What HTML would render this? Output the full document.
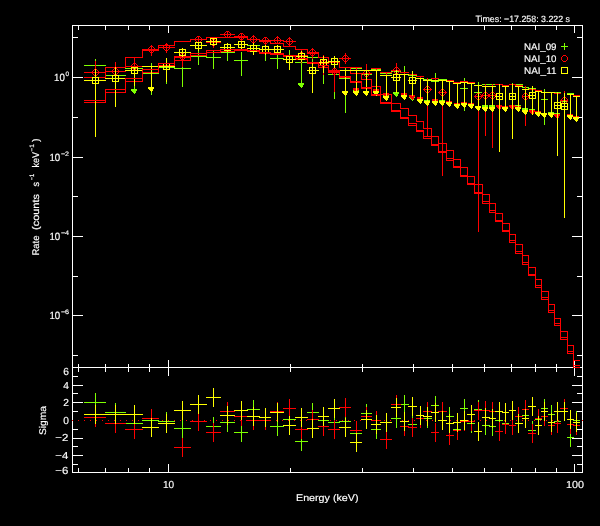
<!DOCTYPE html><html><head><meta charset="utf-8"><title>Spectral fit</title><style>html,body{margin:0;padding:0;background:#000;overflow:hidden}body{width:600px;height:526px;font-family:"Liberation Sans",sans-serif}</style></head><body><svg width="600" height="526" viewBox="0 0 600 526" shape-rendering="crispEdges" style="display:block"><rect width="600" height="526" fill="#000"/><path fill="#ffffff" d="M72 25h511v1h-511zM72 367h511v1h-511zM72 472h511v1h-511zM72 25h1v448h-1zM582 25h1v448h-1zM78 26h1v4h-1zM78 364h1v8h-1zM78 468h1v4h-1zM105 26h1v4h-1zM105 364h1v8h-1zM105 468h1v4h-1zM128 26h1v4h-1zM128 364h1v8h-1zM128 468h1v4h-1zM149 26h1v4h-1zM149 364h1v8h-1zM149 468h1v4h-1zM290 26h1v4h-1zM290 364h1v8h-1zM290 468h1v4h-1zM362 26h1v4h-1zM362 364h1v8h-1zM362 468h1v4h-1zM413 26h1v4h-1zM413 364h1v8h-1zM413 468h1v4h-1zM452 26h1v4h-1zM452 364h1v8h-1zM452 468h1v4h-1zM484 26h1v4h-1zM484 364h1v8h-1zM484 468h1v4h-1zM511 26h1v4h-1zM511 364h1v8h-1zM511 468h1v4h-1zM535 26h1v4h-1zM535 364h1v8h-1zM535 468h1v4h-1zM556 26h1v4h-1zM556 364h1v8h-1zM556 468h1v4h-1zM168 26h1v7h-1zM168 360h1v16h-1zM168 464h1v8h-1zM574 26h1v7h-1zM574 360h1v16h-1zM574 464h1v8h-1zM73 355h5v1h-5zM577 355h5v1h-5zM73 315h10v1h-10zM572 315h10v1h-10zM73 276h5v1h-5zM577 276h5v1h-5zM73 236h10v1h-10zM572 236h10v1h-10zM73 196h5v1h-5zM577 196h5v1h-5zM73 157h10v1h-10zM572 157h10v1h-10zM73 117h5v1h-5zM577 117h5v1h-5zM73 77h10v1h-10zM572 77h10v1h-10zM73 37h5v1h-5zM577 37h5v1h-5zM73 464h5v1h-5zM577 464h5v1h-5zM73 455h10v1h-10zM572 455h10v1h-10zM73 446h5v1h-5zM577 446h5v1h-5zM73 438h10v1h-10zM572 438h10v1h-10zM73 429h5v1h-5zM577 429h5v1h-5zM73 411h5v1h-5zM577 411h5v1h-5zM73 402h10v1h-10zM572 402h10v1h-10zM73 393h5v1h-5zM577 393h5v1h-5zM73 385h10v1h-10zM572 385h10v1h-10zM73 376h5v1h-5zM577 376h5v1h-5z"/><path fill="#7fff00" d="M84 65h22v1h-22zM95 59h1v22h-1zM105 75h21v1h-21zM115 70h1v16h-1zM125 68h18v1h-18zM134 68h1v25h-1zM131 89h6v1h-6zM131 90h6v1h-6zM132 91h4v1h-4zM133 92h3v1h-3zM134 93h1v1h-1zM142 73h17v1h-17zM151 63h1v32h-1zM158 67h17v1h-17zM166 62h1v22h-1zM174 68h17v1h-17zM182 62h1v25h-1zM190 56h17v1h-17zM198 50h1v15h-1zM206 57h15v1h-15zM213 51h1v18h-1zM220 52h15v1h-15zM227 47h1v14h-1zM234 60h14v1h-14zM241 52h1v24h-1zM247 45h13v1h-13zM253 43h1v8h-1zM259 53h12v1h-12zM265 46h1v15h-1zM270 58h14v1h-14zM277 55h1v14h-1zM283 56h13v1h-13zM289 50h1v13h-1zM295 62h13v1h-13zM301 62h1v25h-1zM298 83h6v1h-6zM298 84h6v1h-6zM299 85h4v1h-4zM300 86h3v1h-3zM301 87h1v1h-1zM307 57h12v1h-12zM312 53h1v11h-1zM318 67h11v1h-11zM323 60h1v24h-1zM328 74h12v1h-12zM334 67h1v32h-1zM339 78h12v1h-12zM345 68h1v45h-1zM350 68h12v1h-12zM356 68h1v25h-1zM353 89h6v1h-6zM353 90h6v1h-6zM354 91h4v1h-4zM355 92h3v1h-3zM356 93h1v1h-1zM361 74h11v1h-11zM366 70h1v11h-1zM371 69h10v1h-10zM376 69h1v25h-1zM373 90h6v1h-6zM373 91h6v1h-6zM374 92h4v1h-4zM375 93h3v1h-3zM376 94h1v1h-1zM380 73h12v1h-12zM386 73h1v25h-1zM383 94h6v1h-6zM383 95h6v1h-6zM384 96h4v1h-4zM385 97h3v1h-3zM386 98h1v1h-1zM391 71h10v1h-10zM396 71h1v25h-1zM393 92h6v1h-6zM393 93h6v1h-6zM394 94h4v1h-4zM395 95h3v1h-3zM396 96h1v1h-1zM400 72h9v1h-9zM404 66h1v15h-1zM408 75h9v1h-9zM412 75h1v25h-1zM409 96h6v1h-6zM409 97h6v1h-6zM410 98h4v1h-4zM411 99h3v1h-3zM412 100h1v1h-1zM423 79h9v1h-9zM427 79h1v25h-1zM424 100h6v1h-6zM424 101h6v1h-6zM425 102h4v1h-4zM426 103h3v1h-3zM427 104h1v1h-1zM431 81h8v1h-8zM435 73h1v18h-1zM438 79h9v1h-9zM442 79h1v25h-1zM439 100h6v1h-6zM439 101h6v1h-6zM440 102h4v1h-4zM441 103h3v1h-3zM442 104h1v1h-1zM460 88h8v1h-8zM464 78h1v33h-1zM474 92h8v1h-8zM478 82h1v19h-1zM482 84h8v1h-8zM485 84h1v25h-1zM482 105h6v1h-6zM482 106h6v1h-6zM483 107h4v1h-4zM484 108h3v1h-3zM485 109h1v1h-1zM489 84h7v1h-7zM492 84h1v25h-1zM489 105h6v1h-6zM489 106h6v1h-6zM490 107h4v1h-4zM491 108h3v1h-3zM492 109h1v1h-1zM509 96h7v1h-7zM512 83h1v13h-1zM515 84h8v1h-8zM518 84h1v25h-1zM515 105h6v1h-6zM515 106h6v1h-6zM516 107h4v1h-4zM517 108h3v1h-3zM518 109h1v1h-1zM522 87h7v1h-7zM525 87h1v25h-1zM522 108h6v1h-6zM522 109h6v1h-6zM523 110h4v1h-4zM524 111h3v1h-3zM525 112h1v1h-1zM528 88h8v1h-8zM532 88h1v25h-1zM529 109h6v1h-6zM529 110h6v1h-6zM530 111h4v1h-4zM531 112h3v1h-3zM532 113h1v1h-1zM541 99h7v1h-7zM544 89h1v36h-1zM548 92h7v1h-7zM551 92h1v24h-1zM548 112h6v1h-6zM548 113h6v1h-6zM549 114h4v1h-4zM550 115h3v1h-3zM551 116h1v1h-1zM554 92h7v1h-7zM557 92h1v25h-1zM554 113h6v1h-6zM554 114h6v1h-6zM555 115h4v1h-4zM556 116h3v1h-3zM557 117h1v1h-1zM560 101h8v1h-8zM564 95h1v14h-1zM567 93h7v1h-7zM570 93h1v25h-1zM567 114h6v1h-6zM567 115h6v1h-6zM568 116h4v1h-4zM569 117h3v1h-3zM570 118h1v1h-1z"/><path fill="#ff0000" d="M84 102h22v1h-22zM105 92h1v11h-1zM105 92h21v1h-21zM125 81h1v12h-1zM125 81h18v1h-18zM142 72h1v10h-1zM142 72h17v1h-17zM158 65h1v8h-1zM158 65h17v1h-17zM174 60h1v6h-1zM174 60h17v1h-17zM190 55h1v6h-1zM190 55h17v1h-17zM206 52h1v4h-1zM206 52h15v1h-15zM220 51h1v2h-1zM220 51h15v1h-15zM234 50h1v2h-1zM234 50h14v1h-14zM247 50h1v2h-1zM247 51h13v1h-13zM259 51h1v3h-1zM259 53h12v1h-12zM270 53h1v2h-1zM270 54h14v1h-14zM283 54h1v3h-1zM283 56h13v1h-13zM295 56h1v4h-1zM295 59h13v1h-13zM307 59h1v5h-1zM307 63h12v1h-12zM318 63h1v5h-1zM318 67h11v1h-11zM328 67h1v6h-1zM328 72h12v1h-12zM339 72h1v6h-1zM339 77h12v1h-12zM350 77h1v6h-1zM350 82h12v1h-12zM361 82h1v7h-1zM361 88h11v1h-11zM371 88h1v8h-1zM371 95h10v1h-10zM380 95h1v9h-1zM380 103h12v1h-12zM391 103h1v9h-1zM391 111h10v1h-10zM400 111h1v8h-1zM400 118h9v1h-9zM408 118h1v8h-1zM408 125h9v1h-9zM416 125h1v7h-1zM416 131h8v1h-8zM423 131h1v8h-1zM423 138h9v1h-9zM431 138h1v8h-1zM431 145h8v1h-8zM438 145h1v8h-1zM438 152h9v1h-9zM446 152h1v9h-1zM446 160h8v1h-8zM453 160h1v8h-1zM453 167h8v1h-8zM460 167h1v10h-1zM460 176h8v1h-8zM467 176h1v9h-1zM467 184h8v1h-8zM474 184h1v10h-1zM474 193h9v1h-9zM482 193h1v11h-1zM482 203h8v1h-8zM489 203h1v10h-1zM489 212h7v1h-7zM495 212h1v10h-1zM495 221h8v1h-8zM502 221h1v11h-1zM502 231h8v1h-8zM509 231h1v12h-1zM509 242h7v1h-7zM515 242h1v12h-1zM515 253h8v1h-8zM522 253h1v12h-1zM522 264h7v1h-7zM528 264h1v12h-1zM528 275h8v1h-8zM535 275h1v13h-1zM535 287h7v1h-7zM541 287h1v13h-1zM541 299h8v1h-8zM548 299h1v14h-1zM548 312h7v1h-7zM554 312h1v14h-1zM554 325h7v1h-7zM560 325h1v15h-1zM560 339h8v1h-8zM567 339h1v15h-1zM567 353h7v1h-7zM573 353h1v15h-1zM573 367h7v1h-7z"/><path fill="#ff0000" d="M84 72h22v1h-22zM95 61h1v40h-1zM95 75h1v1h-1zM95 69h1v1h-1zM95 75h1v1h-1zM95 69h1v1h-1zM96 75h1v1h-1zM96 69h1v1h-1zM94 75h1v1h-1zM94 69h1v1h-1zM97 74h1v1h-1zM97 70h1v1h-1zM93 74h1v1h-1zM93 70h1v1h-1zM98 73h1v1h-1zM98 71h1v1h-1zM92 73h1v1h-1zM92 71h1v1h-1zM98 72h1v1h-1zM98 72h1v1h-1zM92 72h1v1h-1zM92 72h1v1h-1zM105 71h21v1h-21zM115 62h1v24h-1zM115 74h1v1h-1zM115 68h1v1h-1zM115 74h1v1h-1zM115 68h1v1h-1zM116 74h1v1h-1zM116 68h1v1h-1zM114 74h1v1h-1zM114 68h1v1h-1zM117 73h1v1h-1zM117 69h1v1h-1zM113 73h1v1h-1zM113 69h1v1h-1zM118 72h1v1h-1zM118 70h1v1h-1zM112 72h1v1h-1zM112 70h1v1h-1zM118 71h1v1h-1zM118 71h1v1h-1zM112 71h1v1h-1zM112 71h1v1h-1zM125 66h18v1h-18zM134 58h1v18h-1zM134 69h1v1h-1zM134 63h1v1h-1zM134 69h1v1h-1zM134 63h1v1h-1zM135 69h1v1h-1zM135 63h1v1h-1zM133 69h1v1h-1zM133 63h1v1h-1zM136 68h1v1h-1zM136 64h1v1h-1zM132 68h1v1h-1zM132 64h1v1h-1zM137 67h1v1h-1zM137 65h1v1h-1zM131 67h1v1h-1zM131 65h1v1h-1zM137 66h1v1h-1zM137 66h1v1h-1zM131 66h1v1h-1zM131 66h1v1h-1zM142 49h17v1h-17zM151 45h1v11h-1zM151 52h1v1h-1zM151 46h1v1h-1zM151 52h1v1h-1zM151 46h1v1h-1zM152 52h1v1h-1zM152 46h1v1h-1zM150 52h1v1h-1zM150 46h1v1h-1zM153 51h1v1h-1zM153 47h1v1h-1zM149 51h1v1h-1zM149 47h1v1h-1zM154 50h1v1h-1zM154 48h1v1h-1zM148 50h1v1h-1zM148 48h1v1h-1zM154 49h1v1h-1zM154 49h1v1h-1zM148 49h1v1h-1zM148 49h1v1h-1zM158 47h17v1h-17zM166 43h1v10h-1zM166 50h1v1h-1zM166 44h1v1h-1zM166 50h1v1h-1zM166 44h1v1h-1zM167 50h1v1h-1zM167 44h1v1h-1zM165 50h1v1h-1zM165 44h1v1h-1zM168 49h1v1h-1zM168 45h1v1h-1zM164 49h1v1h-1zM164 45h1v1h-1zM169 48h1v1h-1zM169 46h1v1h-1zM163 48h1v1h-1zM163 46h1v1h-1zM169 47h1v1h-1zM169 47h1v1h-1zM163 47h1v1h-1zM163 47h1v1h-1zM174 56h17v1h-17zM182 50h1v17h-1zM182 59h1v1h-1zM182 53h1v1h-1zM182 59h1v1h-1zM182 53h1v1h-1zM183 59h1v1h-1zM183 53h1v1h-1zM181 59h1v1h-1zM181 53h1v1h-1zM184 58h1v1h-1zM184 54h1v1h-1zM180 58h1v1h-1zM180 54h1v1h-1zM185 57h1v1h-1zM185 55h1v1h-1zM179 57h1v1h-1zM179 55h1v1h-1zM185 56h1v1h-1zM185 56h1v1h-1zM179 56h1v1h-1zM179 56h1v1h-1zM190 39h17v1h-17zM198 36h1v7h-1zM198 42h1v1h-1zM198 36h1v1h-1zM198 42h1v1h-1zM198 36h1v1h-1zM199 42h1v1h-1zM199 36h1v1h-1zM197 42h1v1h-1zM197 36h1v1h-1zM200 41h1v1h-1zM200 37h1v1h-1zM196 41h1v1h-1zM196 37h1v1h-1zM201 40h1v1h-1zM201 38h1v1h-1zM195 40h1v1h-1zM195 38h1v1h-1zM201 39h1v1h-1zM201 39h1v1h-1zM195 39h1v1h-1zM195 39h1v1h-1zM206 42h15v1h-15zM213 38h1v10h-1zM213 45h1v1h-1zM213 39h1v1h-1zM213 45h1v1h-1zM213 39h1v1h-1zM214 45h1v1h-1zM214 39h1v1h-1zM212 45h1v1h-1zM212 39h1v1h-1zM215 44h1v1h-1zM215 40h1v1h-1zM211 44h1v1h-1zM211 40h1v1h-1zM216 43h1v1h-1zM216 41h1v1h-1zM210 43h1v1h-1zM210 41h1v1h-1zM216 42h1v1h-1zM216 42h1v1h-1zM210 42h1v1h-1zM210 42h1v1h-1zM220 34h15v1h-15zM227 31h1v7h-1zM227 37h1v1h-1zM227 31h1v1h-1zM227 37h1v1h-1zM227 31h1v1h-1zM228 37h1v1h-1zM228 31h1v1h-1zM226 37h1v1h-1zM226 31h1v1h-1zM229 36h1v1h-1zM229 32h1v1h-1zM225 36h1v1h-1zM225 32h1v1h-1zM230 35h1v1h-1zM230 33h1v1h-1zM224 35h1v1h-1zM224 33h1v1h-1zM230 34h1v1h-1zM230 34h1v1h-1zM224 34h1v1h-1zM224 34h1v1h-1zM234 36h14v1h-14zM241 33h1v8h-1zM241 39h1v1h-1zM241 33h1v1h-1zM241 39h1v1h-1zM241 33h1v1h-1zM242 39h1v1h-1zM242 33h1v1h-1zM240 39h1v1h-1zM240 33h1v1h-1zM243 38h1v1h-1zM243 34h1v1h-1zM239 38h1v1h-1zM239 34h1v1h-1zM244 37h1v1h-1zM244 35h1v1h-1zM238 37h1v1h-1zM238 35h1v1h-1zM244 36h1v1h-1zM244 36h1v1h-1zM238 36h1v1h-1zM238 36h1v1h-1zM247 39h13v1h-13zM253 35h1v9h-1zM253 42h1v1h-1zM253 36h1v1h-1zM253 42h1v1h-1zM253 36h1v1h-1zM254 42h1v1h-1zM254 36h1v1h-1zM252 42h1v1h-1zM252 36h1v1h-1zM255 41h1v1h-1zM255 37h1v1h-1zM251 41h1v1h-1zM251 37h1v1h-1zM256 40h1v1h-1zM256 38h1v1h-1zM250 40h1v1h-1zM250 38h1v1h-1zM256 39h1v1h-1zM256 39h1v1h-1zM250 39h1v1h-1zM250 39h1v1h-1zM259 40h12v1h-12zM265 37h1v8h-1zM265 43h1v1h-1zM265 37h1v1h-1zM265 43h1v1h-1zM265 37h1v1h-1zM266 43h1v1h-1zM266 37h1v1h-1zM264 43h1v1h-1zM264 37h1v1h-1zM267 42h1v1h-1zM267 38h1v1h-1zM263 42h1v1h-1zM263 38h1v1h-1zM268 41h1v1h-1zM268 39h1v1h-1zM262 41h1v1h-1zM262 39h1v1h-1zM268 40h1v1h-1zM268 40h1v1h-1zM262 40h1v1h-1zM262 40h1v1h-1zM270 40h14v1h-14zM277 36h1v8h-1zM277 43h1v1h-1zM277 37h1v1h-1zM277 43h1v1h-1zM277 37h1v1h-1zM278 43h1v1h-1zM278 37h1v1h-1zM276 43h1v1h-1zM276 37h1v1h-1zM279 42h1v1h-1zM279 38h1v1h-1zM275 42h1v1h-1zM275 38h1v1h-1zM280 41h1v1h-1zM280 39h1v1h-1zM274 41h1v1h-1zM274 39h1v1h-1zM280 40h1v1h-1zM280 40h1v1h-1zM274 40h1v1h-1zM274 40h1v1h-1zM283 41h13v1h-13zM289 37h1v9h-1zM289 44h1v1h-1zM289 38h1v1h-1zM289 44h1v1h-1zM289 38h1v1h-1zM290 44h1v1h-1zM290 38h1v1h-1zM288 44h1v1h-1zM288 38h1v1h-1zM291 43h1v1h-1zM291 39h1v1h-1zM287 43h1v1h-1zM287 39h1v1h-1zM292 42h1v1h-1zM292 40h1v1h-1zM286 42h1v1h-1zM286 40h1v1h-1zM292 41h1v1h-1zM292 41h1v1h-1zM286 41h1v1h-1zM286 41h1v1h-1zM295 55h13v1h-13zM301 49h1v14h-1zM301 58h1v1h-1zM301 52h1v1h-1zM301 58h1v1h-1zM301 52h1v1h-1zM302 58h1v1h-1zM302 52h1v1h-1zM300 58h1v1h-1zM300 52h1v1h-1zM303 57h1v1h-1zM303 53h1v1h-1zM299 57h1v1h-1zM299 53h1v1h-1zM304 56h1v1h-1zM304 54h1v1h-1zM298 56h1v1h-1zM298 54h1v1h-1zM304 55h1v1h-1zM304 55h1v1h-1zM298 55h1v1h-1zM298 55h1v1h-1zM307 52h12v1h-12zM312 48h1v11h-1zM312 55h1v1h-1zM312 49h1v1h-1zM312 55h1v1h-1zM312 49h1v1h-1zM313 55h1v1h-1zM313 49h1v1h-1zM311 55h1v1h-1zM311 49h1v1h-1zM314 54h1v1h-1zM314 50h1v1h-1zM310 54h1v1h-1zM310 50h1v1h-1zM315 53h1v1h-1zM315 51h1v1h-1zM309 53h1v1h-1zM309 51h1v1h-1zM315 52h1v1h-1zM315 52h1v1h-1zM309 52h1v1h-1zM309 52h1v1h-1zM318 63h11v1h-11zM323 55h1v20h-1zM323 66h1v1h-1zM323 60h1v1h-1zM323 66h1v1h-1zM323 60h1v1h-1zM324 66h1v1h-1zM324 60h1v1h-1zM322 66h1v1h-1zM322 60h1v1h-1zM325 65h1v1h-1zM325 61h1v1h-1zM321 65h1v1h-1zM321 61h1v1h-1zM326 64h1v1h-1zM326 62h1v1h-1zM320 64h1v1h-1zM320 62h1v1h-1zM326 63h1v1h-1zM326 63h1v1h-1zM320 63h1v1h-1zM320 63h1v1h-1zM328 71h12v1h-12zM334 67h1v25h-1zM334 74h1v1h-1zM334 68h1v1h-1zM334 74h1v1h-1zM334 68h1v1h-1zM335 74h1v1h-1zM335 68h1v1h-1zM333 74h1v1h-1zM333 68h1v1h-1zM336 73h1v1h-1zM336 69h1v1h-1zM332 73h1v1h-1zM332 69h1v1h-1zM337 72h1v1h-1zM337 70h1v1h-1zM331 72h1v1h-1zM331 70h1v1h-1zM337 71h1v1h-1zM337 71h1v1h-1zM331 71h1v1h-1zM331 71h1v1h-1zM339 58h12v1h-12zM345 53h1v11h-1zM345 61h1v1h-1zM345 55h1v1h-1zM345 61h1v1h-1zM345 55h1v1h-1zM346 61h1v1h-1zM346 55h1v1h-1zM344 61h1v1h-1zM344 55h1v1h-1zM347 60h1v1h-1zM347 56h1v1h-1zM343 60h1v1h-1zM343 56h1v1h-1zM348 59h1v1h-1zM348 57h1v1h-1zM342 59h1v1h-1zM342 57h1v1h-1zM348 58h1v1h-1zM348 58h1v1h-1zM342 58h1v1h-1zM342 58h1v1h-1zM350 67h12v1h-12zM356 67h1v25h-1zM353 88h6v1h-6zM353 89h6v1h-6zM354 90h4v1h-4zM355 91h3v1h-3zM356 92h1v1h-1zM361 73h11v1h-11zM366 64h1v22h-1zM366 76h1v1h-1zM366 70h1v1h-1zM366 76h1v1h-1zM366 70h1v1h-1zM367 76h1v1h-1zM367 70h1v1h-1zM365 76h1v1h-1zM365 70h1v1h-1zM368 75h1v1h-1zM368 71h1v1h-1zM364 75h1v1h-1zM364 71h1v1h-1zM369 74h1v1h-1zM369 72h1v1h-1zM363 74h1v1h-1zM363 72h1v1h-1zM369 73h1v1h-1zM369 73h1v1h-1zM363 73h1v1h-1zM363 73h1v1h-1zM371 68h10v1h-10zM376 68h1v25h-1zM373 89h6v1h-6zM373 90h6v1h-6zM374 91h4v1h-4zM375 92h3v1h-3zM376 93h1v1h-1zM380 72h12v1h-12zM386 72h1v25h-1zM383 93h6v1h-6zM383 94h6v1h-6zM384 95h4v1h-4zM385 96h3v1h-3zM386 97h1v1h-1zM391 70h10v1h-10zM396 63h1v18h-1zM396 73h1v1h-1zM396 67h1v1h-1zM396 73h1v1h-1zM396 67h1v1h-1zM397 73h1v1h-1zM397 67h1v1h-1zM395 73h1v1h-1zM395 67h1v1h-1zM398 72h1v1h-1zM398 68h1v1h-1zM394 72h1v1h-1zM394 68h1v1h-1zM399 71h1v1h-1zM399 69h1v1h-1zM393 71h1v1h-1zM393 69h1v1h-1zM399 70h1v1h-1zM399 70h1v1h-1zM393 70h1v1h-1zM393 70h1v1h-1zM400 72h9v1h-9zM404 72h1v25h-1zM401 93h6v1h-6zM401 94h6v1h-6zM402 95h4v1h-4zM403 96h3v1h-3zM404 97h1v1h-1zM408 74h9v1h-9zM412 74h1v25h-1zM409 95h6v1h-6zM409 96h6v1h-6zM410 97h4v1h-4zM411 98h3v1h-3zM412 99h1v1h-1zM416 76h8v1h-8zM420 76h1v25h-1zM417 97h6v1h-6zM417 98h6v1h-6zM418 99h4v1h-4zM419 100h3v1h-3zM420 101h1v1h-1zM423 89h9v1h-9zM427 78h1v58h-1zM427 92h1v1h-1zM427 86h1v1h-1zM427 92h1v1h-1zM427 86h1v1h-1zM428 92h1v1h-1zM428 86h1v1h-1zM426 92h1v1h-1zM426 86h1v1h-1zM429 91h1v1h-1zM429 87h1v1h-1zM425 91h1v1h-1zM425 87h1v1h-1zM430 90h1v1h-1zM430 88h1v1h-1zM424 90h1v1h-1zM424 88h1v1h-1zM430 89h1v1h-1zM430 89h1v1h-1zM424 89h1v1h-1zM424 89h1v1h-1zM431 78h8v1h-8zM435 78h1v25h-1zM432 99h6v1h-6zM432 100h6v1h-6zM433 101h4v1h-4zM434 102h3v1h-3zM435 103h1v1h-1zM438 92h9v1h-9zM442 80h1v96h-1zM442 95h1v1h-1zM442 89h1v1h-1zM442 95h1v1h-1zM442 89h1v1h-1zM443 95h1v1h-1zM443 89h1v1h-1zM441 95h1v1h-1zM441 89h1v1h-1zM444 94h1v1h-1zM444 90h1v1h-1zM440 94h1v1h-1zM440 90h1v1h-1zM445 93h1v1h-1zM445 91h1v1h-1zM439 93h1v1h-1zM439 91h1v1h-1zM445 92h1v1h-1zM445 92h1v1h-1zM439 92h1v1h-1zM439 92h1v1h-1zM446 80h8v1h-8zM449 80h1v25h-1zM446 101h6v1h-6zM446 102h6v1h-6zM447 103h4v1h-4zM448 104h3v1h-3zM449 105h1v1h-1zM453 82h8v1h-8zM457 82h1v25h-1zM454 103h6v1h-6zM454 104h6v1h-6zM455 105h4v1h-4zM456 106h3v1h-3zM457 107h1v1h-1zM460 81h8v1h-8zM464 81h1v25h-1zM461 102h6v1h-6zM461 103h6v1h-6zM462 104h4v1h-4zM463 105h3v1h-3zM464 106h1v1h-1zM467 82h8v1h-8zM471 82h1v25h-1zM468 103h6v1h-6zM468 104h6v1h-6zM469 105h4v1h-4zM470 106h3v1h-3zM471 107h1v1h-1zM474 96h8v1h-8zM478 86h1v146h-1zM478 99h1v1h-1zM478 93h1v1h-1zM478 99h1v1h-1zM478 93h1v1h-1zM479 99h1v1h-1zM479 93h1v1h-1zM477 99h1v1h-1zM477 93h1v1h-1zM480 98h1v1h-1zM480 94h1v1h-1zM476 98h1v1h-1zM476 94h1v1h-1zM481 97h1v1h-1zM481 95h1v1h-1zM475 97h1v1h-1zM475 95h1v1h-1zM481 96h1v1h-1zM481 96h1v1h-1zM475 96h1v1h-1zM475 96h1v1h-1zM482 95h8v1h-8zM485 84h1v52h-1zM485 98h1v1h-1zM485 92h1v1h-1zM485 98h1v1h-1zM485 92h1v1h-1zM486 98h1v1h-1zM486 92h1v1h-1zM484 98h1v1h-1zM484 92h1v1h-1zM487 97h1v1h-1zM487 93h1v1h-1zM483 97h1v1h-1zM483 93h1v1h-1zM488 96h1v1h-1zM488 94h1v1h-1zM482 96h1v1h-1zM482 94h1v1h-1zM488 95h1v1h-1zM488 95h1v1h-1zM482 95h1v1h-1zM482 95h1v1h-1zM489 95h7v1h-7zM492 84h1v64h-1zM492 98h1v1h-1zM492 92h1v1h-1zM492 98h1v1h-1zM492 92h1v1h-1zM493 98h1v1h-1zM493 92h1v1h-1zM491 98h1v1h-1zM491 92h1v1h-1zM494 97h1v1h-1zM494 93h1v1h-1zM490 97h1v1h-1zM490 93h1v1h-1zM495 96h1v1h-1zM495 94h1v1h-1zM489 96h1v1h-1zM489 94h1v1h-1zM495 95h1v1h-1zM495 95h1v1h-1zM489 95h1v1h-1zM489 95h1v1h-1zM495 84h8v1h-8zM499 84h1v25h-1zM496 105h6v1h-6zM496 106h6v1h-6zM497 107h4v1h-4zM498 108h3v1h-3zM499 109h1v1h-1zM502 85h7v1h-7zM505 85h1v25h-1zM502 106h6v1h-6zM502 107h6v1h-6zM503 108h4v1h-4zM504 109h3v1h-3zM505 110h1v1h-1zM509 84h7v1h-7zM512 84h1v25h-1zM509 105h6v1h-6zM509 106h6v1h-6zM510 107h4v1h-4zM511 108h3v1h-3zM512 109h1v1h-1zM515 85h8v1h-8zM518 85h1v25h-1zM515 106h6v1h-6zM515 107h6v1h-6zM516 108h4v1h-4zM517 109h3v1h-3zM518 110h1v1h-1zM522 96h7v1h-7zM525 86h1v40h-1zM525 99h1v1h-1zM525 93h1v1h-1zM525 99h1v1h-1zM525 93h1v1h-1zM526 99h1v1h-1zM526 93h1v1h-1zM524 99h1v1h-1zM524 93h1v1h-1zM527 98h1v1h-1zM527 94h1v1h-1zM523 98h1v1h-1zM523 94h1v1h-1zM528 97h1v1h-1zM528 95h1v1h-1zM522 97h1v1h-1zM522 95h1v1h-1zM528 96h1v1h-1zM528 96h1v1h-1zM522 96h1v1h-1zM522 96h1v1h-1zM528 89h8v1h-8zM532 89h1v25h-1zM529 110h6v1h-6zM529 111h6v1h-6zM530 112h4v1h-4zM531 113h3v1h-3zM532 114h1v1h-1zM535 90h7v1h-7zM538 90h1v25h-1zM535 111h6v1h-6zM535 112h6v1h-6zM536 113h4v1h-4zM537 114h3v1h-3zM538 115h1v1h-1zM554 93h7v1h-7zM557 93h1v25h-1zM554 114h6v1h-6zM554 115h6v1h-6zM555 116h4v1h-4zM556 117h3v1h-3zM557 118h1v1h-1zM560 100h8v1h-8zM564 91h1v20h-1zM564 103h1v1h-1zM564 97h1v1h-1zM564 103h1v1h-1zM564 97h1v1h-1zM565 103h1v1h-1zM565 97h1v1h-1zM563 103h1v1h-1zM563 97h1v1h-1zM566 102h1v1h-1zM566 98h1v1h-1zM562 102h1v1h-1zM562 98h1v1h-1zM567 101h1v1h-1zM567 99h1v1h-1zM561 101h1v1h-1zM561 99h1v1h-1zM567 100h1v1h-1zM567 100h1v1h-1zM561 100h1v1h-1zM561 100h1v1h-1zM567 94h7v1h-7zM570 94h1v24h-1zM567 114h6v1h-6zM567 115h6v1h-6zM568 116h4v1h-4zM569 117h3v1h-3zM570 118h1v1h-1zM573 95h7v1h-7zM576 95h1v25h-1zM573 116h6v1h-6zM573 117h6v1h-6zM574 118h4v1h-4zM575 119h3v1h-3zM576 120h1v1h-1z"/><path fill="#ff0000" d="M84 77h22v1h-22zM105 67h1v11h-1zM105 67h21v1h-21zM125 57h1v11h-1zM125 57h18v1h-18zM142 50h1v8h-1zM142 50h17v1h-17zM158 45h1v6h-1zM158 45h17v1h-17zM174 41h1v5h-1zM174 41h17v1h-17zM190 39h1v3h-1zM190 39h17v1h-17zM206 37h1v3h-1zM206 37h15v1h-15zM220 37h1v1h-1zM220 37h15v1h-15zM234 37h1v1h-1zM234 37h14v1h-14zM247 37h1v3h-1zM247 39h13v1h-13zM259 39h1v3h-1zM259 41h12v1h-12zM270 41h1v3h-1zM270 43h14v1h-14zM283 43h1v4h-1zM283 46h13v1h-13zM295 46h1v4h-1zM295 49h13v1h-13zM307 49h1v5h-1zM307 53h12v1h-12zM318 53h1v5h-1zM318 57h11v1h-11zM328 57h1v6h-1zM328 62h12v1h-12zM339 62h1v6h-1zM339 67h12v1h-12zM350 67h1v7h-1zM350 73h12v1h-12zM361 73h1v7h-1zM361 79h11v1h-11zM371 79h1v8h-1zM371 86h10v1h-10zM380 86h1v9h-1zM380 94h12v1h-12zM391 94h1v10h-1zM391 103h10v1h-10zM400 103h1v6h-1zM400 108h9v1h-9zM408 108h1v8h-1zM408 115h9v1h-9zM416 115h1v7h-1zM416 121h8v1h-8zM423 121h1v8h-1zM423 128h9v1h-9zM431 128h1v9h-1zM431 136h8v1h-8zM438 136h1v8h-1zM438 143h9v1h-9zM446 143h1v8h-1zM446 150h8v1h-8zM453 150h1v10h-1zM453 159h8v1h-8zM460 159h1v9h-1zM460 167h8v1h-8zM467 167h1v10h-1zM467 176h8v1h-8zM474 176h1v9h-1zM474 184h9v1h-9zM482 184h1v11h-1zM482 194h8v1h-8zM489 194h1v10h-1zM489 203h7v1h-7zM495 203h1v11h-1zM495 213h8v1h-8zM502 213h1v11h-1zM502 223h8v1h-8zM509 223h1v12h-1zM509 234h7v1h-7zM515 234h1v11h-1zM515 244h8v1h-8zM522 244h1v12h-1zM522 255h7v1h-7zM528 255h1v13h-1zM528 267h8v1h-8zM535 267h1v13h-1zM535 279h7v1h-7zM541 279h1v13h-1zM541 291h8v1h-8zM548 291h1v14h-1zM548 304h7v1h-7zM554 304h1v15h-1zM554 318h7v1h-7zM560 318h1v14h-1zM560 331h8v1h-8zM567 331h1v15h-1zM567 345h7v1h-7zM573 345h1v16h-1zM573 360h7v1h-7z"/><path fill="#ffff00" d="M84 80h22v1h-22zM95 69h1v68h-1zM92 77h7v1h-7zM92 83h7v1h-7zM92 77h1v7h-1zM98 77h1v7h-1zM105 78h21v1h-21zM115 67h1v40h-1zM112 75h7v1h-7zM112 81h7v1h-7zM112 75h1v7h-1zM118 75h1v7h-1zM125 70h18v1h-18zM134 67h1v19h-1zM131 67h7v1h-7zM131 73h7v1h-7zM131 67h1v7h-1zM137 67h1v7h-1zM142 66h17v1h-17zM151 66h1v25h-1zM148 87h6v1h-6zM148 88h6v1h-6zM149 89h4v1h-4zM150 90h3v1h-3zM151 91h1v1h-1zM158 66h17v1h-17zM166 58h1v24h-1zM163 63h7v1h-7zM163 69h7v1h-7zM163 63h1v7h-1zM169 63h1v7h-1zM174 52h17v1h-17zM182 48h1v10h-1zM179 49h7v1h-7zM179 55h7v1h-7zM179 49h1v7h-1zM185 49h1v7h-1zM190 45h17v1h-17zM198 42h1v9h-1zM195 42h7v1h-7zM195 48h7v1h-7zM195 42h1v7h-1zM201 42h1v7h-1zM206 41h15v1h-15zM213 38h1v8h-1zM210 38h7v1h-7zM210 44h7v1h-7zM210 38h1v7h-1zM216 38h1v7h-1zM220 47h15v1h-15zM227 43h1v9h-1zM224 44h7v1h-7zM224 50h7v1h-7zM224 44h1v7h-1zM230 44h1v7h-1zM234 44h14v1h-14zM241 41h1v8h-1zM238 41h7v1h-7zM238 47h7v1h-7zM238 41h1v7h-1zM244 41h1v7h-1zM247 48h13v1h-13zM253 43h1v12h-1zM250 45h7v1h-7zM250 51h7v1h-7zM250 45h1v7h-1zM256 45h1v7h-1zM259 49h12v1h-12zM265 45h1v10h-1zM262 46h7v1h-7zM262 52h7v1h-7zM262 46h1v7h-1zM268 46h1v7h-1zM270 49h14v1h-14zM277 45h1v9h-1zM274 46h7v1h-7zM274 52h7v1h-7zM274 46h1v7h-1zM280 46h1v7h-1zM283 59h13v1h-13zM289 55h1v15h-1zM286 56h7v1h-7zM286 62h7v1h-7zM286 56h1v7h-1zM292 56h1v7h-1zM295 56h13v1h-13zM301 51h1v11h-1zM298 53h7v1h-7zM298 59h7v1h-7zM298 53h1v7h-1zM304 53h1v7h-1zM307 70h12v1h-12zM312 63h1v30h-1zM309 67h7v1h-7zM309 73h7v1h-7zM309 67h1v7h-1zM315 67h1v7h-1zM318 62h11v1h-11zM323 56h1v17h-1zM320 59h7v1h-7zM320 65h7v1h-7zM320 59h1v7h-1zM326 59h1v7h-1zM328 61h12v1h-12zM334 56h1v12h-1zM331 58h7v1h-7zM331 64h7v1h-7zM331 58h1v7h-1zM337 58h1v7h-1zM339 70h12v1h-12zM345 70h1v25h-1zM342 91h6v1h-6zM342 92h6v1h-6zM343 93h4v1h-4zM344 94h3v1h-3zM345 95h1v1h-1zM350 70h12v1h-12zM356 70h1v25h-1zM353 91h6v1h-6zM353 92h6v1h-6zM354 93h4v1h-4zM355 94h3v1h-3zM356 95h1v1h-1zM361 70h11v1h-11zM366 70h1v25h-1zM363 91h6v1h-6zM363 92h6v1h-6zM364 93h4v1h-4zM365 94h3v1h-3zM366 95h1v1h-1zM371 70h10v1h-10zM376 70h1v25h-1zM373 91h6v1h-6zM373 92h6v1h-6zM374 93h4v1h-4zM375 94h3v1h-3zM376 95h1v1h-1zM380 75h12v1h-12zM386 75h1v25h-1zM383 96h6v1h-6zM383 97h6v1h-6zM384 98h4v1h-4zM385 99h3v1h-3zM386 100h1v1h-1zM391 77h10v1h-10zM396 70h1v23h-1zM393 74h7v1h-7zM393 80h7v1h-7zM393 74h1v7h-1zM399 74h1v7h-1zM400 74h9v1h-9zM404 74h1v25h-1zM401 95h6v1h-6zM401 96h6v1h-6zM402 97h4v1h-4zM403 98h3v1h-3zM404 99h1v1h-1zM408 80h9v1h-9zM412 71h1v25h-1zM409 77h7v1h-7zM409 83h7v1h-7zM409 77h1v7h-1zM415 77h1v7h-1zM416 78h8v1h-8zM420 78h1v25h-1zM417 99h6v1h-6zM417 100h6v1h-6zM418 101h4v1h-4zM419 102h3v1h-3zM420 103h1v1h-1zM423 80h9v1h-9zM427 80h1v25h-1zM424 101h6v1h-6zM424 102h6v1h-6zM425 103h4v1h-4zM426 104h3v1h-3zM427 105h1v1h-1zM431 80h8v1h-8zM435 80h1v25h-1zM432 101h6v1h-6zM432 102h6v1h-6zM433 103h4v1h-4zM434 104h3v1h-3zM435 105h1v1h-1zM438 80h9v1h-9zM442 80h1v25h-1zM439 101h6v1h-6zM439 102h6v1h-6zM440 103h4v1h-4zM441 104h3v1h-3zM442 105h1v1h-1zM446 81h8v1h-8zM449 81h1v25h-1zM446 102h6v1h-6zM446 103h6v1h-6zM447 104h4v1h-4zM448 105h3v1h-3zM449 106h1v1h-1zM453 83h8v1h-8zM457 83h1v25h-1zM454 104h6v1h-6zM454 105h6v1h-6zM455 106h4v1h-4zM456 107h3v1h-3zM457 108h1v1h-1zM460 82h8v1h-8zM464 82h1v25h-1zM461 103h6v1h-6zM461 104h6v1h-6zM462 105h4v1h-4zM463 106h3v1h-3zM464 107h1v1h-1zM467 83h8v1h-8zM471 83h1v25h-1zM468 104h6v1h-6zM468 105h6v1h-6zM469 106h4v1h-4zM470 107h3v1h-3zM471 108h1v1h-1zM474 85h8v1h-8zM478 85h1v25h-1zM475 106h6v1h-6zM475 107h6v1h-6zM476 108h4v1h-4zM477 109h3v1h-3zM478 110h1v1h-1zM482 86h8v1h-8zM485 86h1v25h-1zM482 107h6v1h-6zM482 108h6v1h-6zM483 109h4v1h-4zM484 110h3v1h-3zM485 111h1v1h-1zM489 86h7v1h-7zM492 86h1v25h-1zM489 107h6v1h-6zM489 108h6v1h-6zM490 109h4v1h-4zM491 110h3v1h-3zM492 111h1v1h-1zM495 96h8v1h-8zM499 84h1v68h-1zM496 93h7v1h-7zM496 99h7v1h-7zM496 93h1v7h-1zM502 93h1v7h-1zM502 86h7v1h-7zM505 86h1v25h-1zM502 107h6v1h-6zM502 108h6v1h-6zM503 109h4v1h-4zM504 110h3v1h-3zM505 111h1v1h-1zM509 96h7v1h-7zM512 84h1v55h-1zM509 93h7v1h-7zM509 99h7v1h-7zM509 93h1v7h-1zM515 93h1v7h-1zM515 86h8v1h-8zM518 86h1v25h-1zM515 107h6v1h-6zM515 108h6v1h-6zM516 109h4v1h-4zM517 110h3v1h-3zM518 111h1v1h-1zM522 89h7v1h-7zM525 89h1v25h-1zM522 110h6v1h-6zM522 111h6v1h-6zM523 112h4v1h-4zM524 113h3v1h-3zM525 114h1v1h-1zM528 95h8v1h-8zM532 86h1v29h-1zM529 92h7v1h-7zM529 98h7v1h-7zM529 92h1v7h-1zM535 92h1v7h-1zM535 91h7v1h-7zM538 91h1v25h-1zM535 112h6v1h-6zM535 113h6v1h-6zM536 114h4v1h-4zM537 115h3v1h-3zM538 116h1v1h-1zM541 92h7v1h-7zM544 92h1v25h-1zM541 113h6v1h-6zM541 114h6v1h-6zM542 115h4v1h-4zM543 116h3v1h-3zM544 117h1v1h-1zM548 92h7v1h-7zM551 92h1v25h-1zM548 113h6v1h-6zM548 114h6v1h-6zM549 115h4v1h-4zM550 116h3v1h-3zM551 117h1v1h-1zM554 105h7v1h-7zM557 92h1v64h-1zM554 102h7v1h-7zM554 108h7v1h-7zM554 102h1v7h-1zM560 102h1v7h-1zM560 106h8v1h-8zM564 93h1v125h-1zM561 103h7v1h-7zM561 109h7v1h-7zM561 103h1v7h-1zM567 103h1v7h-1zM567 94h7v1h-7zM570 94h1v25h-1zM567 115h6v1h-6zM567 116h6v1h-6zM568 117h4v1h-4zM569 118h3v1h-3zM570 119h1v1h-1zM573 96h7v1h-7zM576 96h1v25h-1zM573 117h6v1h-6zM573 118h6v1h-6zM574 119h4v1h-4zM575 120h3v1h-3zM576 121h1v1h-1z"/><path fill="#ff0000" d="M84 100h22v1h-22zM105 89h1v12h-1zM105 89h21v1h-21zM125 78h1v12h-1zM125 78h18v1h-18zM142 69h1v10h-1zM142 69h17v1h-17zM158 63h1v7h-1zM158 63h17v1h-17zM174 57h1v7h-1zM174 57h17v1h-17zM190 53h1v5h-1zM190 53h17v1h-17zM206 50h1v4h-1zM206 50h15v1h-15zM220 49h1v2h-1zM220 49h15v1h-15zM234 49h1v1h-1zM234 49h14v1h-14zM247 49h1v2h-1zM247 50h13v1h-13zM259 50h1v3h-1zM259 52h12v1h-12zM270 52h1v2h-1zM270 53h14v1h-14zM283 53h1v3h-1zM283 55h13v1h-13zM295 55h1v4h-1zM295 58h13v1h-13zM307 58h1v5h-1zM307 62h12v1h-12zM318 62h1v4h-1zM318 65h11v1h-11zM328 65h1v6h-1zM328 70h12v1h-12zM339 70h1v7h-1zM339 76h12v1h-12zM350 76h1v6h-1zM350 81h12v1h-12zM361 81h1v7h-1zM361 87h11v1h-11zM371 87h1v8h-1zM371 94h10v1h-10zM380 94h1v9h-1zM380 102h12v1h-12zM391 102h1v9h-1zM391 110h10v1h-10zM400 110h1v8h-1zM400 117h9v1h-9zM408 117h1v7h-1zM408 123h9v1h-9zM416 123h1v8h-1zM416 130h8v1h-8zM423 130h1v7h-1zM423 136h9v1h-9zM431 136h1v9h-1zM431 144h8v1h-8zM438 144h1v8h-1zM438 151h9v1h-9zM446 151h1v8h-1zM446 158h8v1h-8zM453 158h1v9h-1zM453 166h8v1h-8zM460 166h1v10h-1zM460 175h8v1h-8zM467 175h1v9h-1zM467 183h8v1h-8zM474 183h1v10h-1zM474 192h9v1h-9zM482 192h1v10h-1zM482 201h8v1h-8zM489 201h1v10h-1zM489 210h7v1h-7zM495 210h1v11h-1zM495 220h8v1h-8zM502 220h1v11h-1zM502 230h8v1h-8zM509 230h1v11h-1zM509 240h7v1h-7zM515 240h1v12h-1zM515 251h8v1h-8zM522 251h1v12h-1zM522 262h7v1h-7zM528 262h1v13h-1zM528 274h8v1h-8zM535 274h1v12h-1zM535 285h7v1h-7zM541 285h1v13h-1zM541 297h8v1h-8zM548 297h1v14h-1zM548 310h7v1h-7zM554 310h1v14h-1zM554 323h7v1h-7zM560 323h1v15h-1zM560 337h8v1h-8zM567 337h1v15h-1zM567 351h7v1h-7zM573 351h1v15h-1zM573 365h7v1h-7z"/><path fill="#ff0000" d="M72 420h1v1h-1zM78 420h1v1h-1zM84 420h1v1h-1zM90 420h1v1h-1zM96 420h1v1h-1zM102 420h1v1h-1zM108 420h1v1h-1zM114 420h1v1h-1zM120 420h1v1h-1zM126 420h1v1h-1zM132 420h1v1h-1zM138 420h1v1h-1zM144 420h1v1h-1zM150 420h1v1h-1zM156 420h1v1h-1zM162 420h1v1h-1zM168 420h1v1h-1zM174 420h1v1h-1zM180 420h1v1h-1zM186 420h1v1h-1zM192 420h1v1h-1zM198 420h1v1h-1zM204 420h1v1h-1zM210 420h1v1h-1zM216 420h1v1h-1zM222 420h1v1h-1zM228 420h1v1h-1zM234 420h1v1h-1zM240 420h1v1h-1zM246 420h1v1h-1zM252 420h1v1h-1zM258 420h1v1h-1zM264 420h1v1h-1zM270 420h1v1h-1zM276 420h1v1h-1zM282 420h1v1h-1zM288 420h1v1h-1zM294 420h1v1h-1zM300 420h1v1h-1zM306 420h1v1h-1zM312 420h1v1h-1zM318 420h1v1h-1zM324 420h1v1h-1zM330 420h1v1h-1zM336 420h1v1h-1zM342 420h1v1h-1zM348 420h1v1h-1zM354 420h1v1h-1zM360 420h1v1h-1zM366 420h1v1h-1zM372 420h1v1h-1zM378 420h1v1h-1zM384 420h1v1h-1zM390 420h1v1h-1zM396 420h1v1h-1zM402 420h1v1h-1zM408 420h1v1h-1zM414 420h1v1h-1zM420 420h1v1h-1zM426 420h1v1h-1zM432 420h1v1h-1zM438 420h1v1h-1zM444 420h1v1h-1zM450 420h1v1h-1zM456 420h1v1h-1zM462 420h1v1h-1zM468 420h1v1h-1zM474 420h1v1h-1zM480 420h1v1h-1zM486 420h1v1h-1zM492 420h1v1h-1zM498 420h1v1h-1zM504 420h1v1h-1zM510 420h1v1h-1zM516 420h1v1h-1zM522 420h1v1h-1zM528 420h1v1h-1zM534 420h1v1h-1zM540 420h1v1h-1zM546 420h1v1h-1zM552 420h1v1h-1zM558 420h1v1h-1zM564 420h1v1h-1zM570 420h1v1h-1zM576 420h1v1h-1zM582 420h1v1h-1z"/><path fill="#7fff00" d="M84 402h22v1h-22zM95 393h1v19h-1zM105 412h21v1h-21zM115 403h1v19h-1zM125 423h18v1h-18zM134 414h1v19h-1zM142 420h17v1h-17zM151 411h1v19h-1zM158 421h17v1h-17zM166 412h1v19h-1zM174 428h17v1h-17zM182 419h1v19h-1zM190 421h17v1h-17zM198 412h1v18h-1zM206 426h15v1h-15zM213 417h1v19h-1zM220 422h15v1h-15zM227 413h1v19h-1zM234 432h14v1h-14zM241 423h1v19h-1zM247 409h13v1h-13zM253 400h1v19h-1zM259 420h12v1h-12zM265 411h1v19h-1zM270 426h14v1h-14zM277 417h1v19h-1zM283 419h13v1h-13zM289 410h1v19h-1zM295 441h13v1h-13zM301 432h1v19h-1zM307 412h12v1h-12zM312 403h1v19h-1zM318 420h11v1h-11zM323 411h1v19h-1zM328 422h12v1h-12zM334 413h1v19h-1zM339 421h12v1h-12zM345 412h1v19h-1zM350 433h12v1h-12zM356 424h1v19h-1zM361 413h11v1h-11zM366 404h1v19h-1zM371 429h10v1h-10zM376 420h1v19h-1zM391 418h10v1h-10zM396 409h1v19h-1zM400 404h9v1h-9zM404 395h1v19h-1zM408 424h9v1h-9zM412 415h1v19h-1zM416 418h8v1h-8zM420 409h1v19h-1zM423 418h9v1h-9zM427 409h1v19h-1zM431 405h8v1h-8zM435 396h1v19h-1zM446 416h8v1h-8zM449 407h1v19h-1zM453 429h8v1h-8zM457 420h1v19h-1zM460 408h8v1h-8zM464 399h1v19h-1zM467 423h8v1h-8zM471 414h1v19h-1zM474 409h8v1h-8zM478 400h1v19h-1zM482 425h8v1h-8zM485 416h1v19h-1zM489 426h7v1h-7zM492 417h1v19h-1zM495 420h8v1h-8zM499 411h1v19h-1zM502 423h7v1h-7zM505 414h1v19h-1zM522 415h7v1h-7zM525 406h1v19h-1zM528 430h8v1h-8zM532 421h1v19h-1zM535 419h7v1h-7zM538 410h1v19h-1zM541 408h7v1h-7zM544 399h1v19h-1zM548 414h7v1h-7zM551 405h1v19h-1zM554 421h7v1h-7zM557 412h1v19h-1zM567 437h7v1h-7zM570 428h1v19h-1zM573 420h7v1h-7zM576 411h1v19h-1z"/><path fill="#ff0000" d="M84 417h22v1h-22zM95 408h1v19h-1zM105 423h21v1h-21zM115 414h1v19h-1zM125 429h18v1h-18zM134 420h1v19h-1zM142 418h17v1h-17zM151 409h1v19h-1zM158 423h17v1h-17zM166 414h1v19h-1zM174 447h17v1h-17zM182 438h1v19h-1zM190 421h17v1h-17zM198 412h1v19h-1zM206 432h15v1h-15zM213 423h1v19h-1zM220 411h15v1h-15zM227 402h1v19h-1zM234 416h14v1h-14zM241 407h1v19h-1zM247 420h13v1h-13zM253 411h1v19h-1zM259 420h12v1h-12zM265 411h1v19h-1zM270 411h14v1h-14zM277 402h1v19h-1zM283 408h13v1h-13zM289 399h1v19h-1zM295 429h13v1h-13zM301 420h1v19h-1zM307 419h12v1h-12zM312 410h1v19h-1zM318 426h11v1h-11zM323 417h1v19h-1zM328 429h12v1h-12zM334 420h1v19h-1zM339 407h12v1h-12zM345 398h1v19h-1zM350 430h12v1h-12zM356 421h1v19h-1zM361 416h11v1h-11zM366 407h1v19h-1zM371 420h10v1h-10zM376 411h1v19h-1zM380 439h12v1h-12zM386 430h1v19h-1zM391 404h10v1h-10zM396 395h1v19h-1zM400 426h9v1h-9zM404 417h1v19h-1zM408 427h9v1h-9zM412 418h1v19h-1zM416 418h8v1h-8zM420 409h1v19h-1zM423 411h9v1h-9zM427 402h1v19h-1zM431 432h8v1h-8zM435 423h1v19h-1zM438 411h9v1h-9zM442 402h1v19h-1zM446 435h8v1h-8zM449 426h1v19h-1zM453 430h8v1h-8zM457 421h1v19h-1zM460 421h8v1h-8zM464 412h1v19h-1zM467 421h8v1h-8zM471 412h1v19h-1zM474 410h8v1h-8zM478 402h1v18h-1zM482 410h8v1h-8zM485 401h1v19h-1zM489 411h7v1h-7zM492 402h1v19h-1zM495 431h8v1h-8zM499 422h1v19h-1zM502 424h7v1h-7zM505 415h1v19h-1zM509 425h7v1h-7zM512 416h1v19h-1zM515 416h8v1h-8zM518 407h1v19h-1zM522 409h7v1h-7zM525 400h1v19h-1zM528 433h8v1h-8zM532 424h1v19h-1zM535 418h7v1h-7zM538 409h1v18h-1zM541 416h7v1h-7zM544 407h1v19h-1zM548 425h7v1h-7zM551 416h1v19h-1zM554 423h7v1h-7zM557 414h1v19h-1zM560 408h8v1h-8zM564 399h1v19h-1zM567 424h7v1h-7zM570 415h1v19h-1zM573 425h7v1h-7zM576 416h1v19h-1z"/><path fill="#ffff00" d="M84 414h22v1h-22zM95 405h1v19h-1zM105 414h21v1h-21zM115 405h1v19h-1zM125 414h18v1h-18zM134 405h1v19h-1zM142 427h17v1h-17zM151 418h1v19h-1zM158 423h17v1h-17zM166 414h1v19h-1zM174 410h17v1h-17zM182 401h1v19h-1zM190 404h17v1h-17zM198 395h1v19h-1zM206 397h15v1h-15zM213 388h1v19h-1zM220 415h15v1h-15zM227 406h1v19h-1zM234 410h14v1h-14zM241 401h1v19h-1zM247 416h13v1h-13zM253 407h1v19h-1zM259 417h12v1h-12zM265 408h1v19h-1zM270 412h14v1h-14zM277 403h1v19h-1zM283 425h13v1h-13zM289 416h1v19h-1zM295 417h13v1h-13zM301 408h1v19h-1zM307 428h12v1h-12zM312 419h1v19h-1zM318 416h11v1h-11zM323 407h1v19h-1zM328 408h12v1h-12zM334 399h1v19h-1zM339 427h12v1h-12zM345 418h1v19h-1zM350 442h12v1h-12zM356 433h1v19h-1zM361 419h11v1h-11zM366 410h1v19h-1zM371 424h10v1h-10zM376 415h1v19h-1zM380 422h12v1h-12zM386 413h1v19h-1zM391 407h10v1h-10zM396 398h1v19h-1zM400 421h9v1h-9zM404 412h1v19h-1zM408 406h9v1h-9zM412 397h1v19h-1zM416 415h8v1h-8zM420 406h1v19h-1zM423 416h9v1h-9zM427 407h1v19h-1zM431 412h8v1h-8zM435 403h1v19h-1zM438 420h9v1h-9zM442 411h1v19h-1zM446 423h8v1h-8zM449 414h1v19h-1zM453 422h8v1h-8zM457 413h1v19h-1zM460 420h8v1h-8zM464 411h1v19h-1zM467 414h8v1h-8zM471 405h1v19h-1zM474 431h8v1h-8zM478 422h1v19h-1zM482 417h8v1h-8zM485 408h1v19h-1zM489 418h7v1h-7zM492 409h1v19h-1zM495 411h8v1h-8zM499 402h1v19h-1zM502 412h7v1h-7zM505 403h1v19h-1zM509 410h7v1h-7zM512 401h1v19h-1zM515 423h8v1h-8zM518 414h1v19h-1zM522 418h7v1h-7zM525 409h1v19h-1zM528 406h8v1h-8zM532 397h1v19h-1zM535 425h7v1h-7zM538 416h1v19h-1zM541 411h7v1h-7zM544 402h1v19h-1zM548 422h7v1h-7zM551 413h1v19h-1zM554 411h7v1h-7zM557 402h1v19h-1zM560 411h8v1h-8zM564 402h1v19h-1zM567 419h7v1h-7zM570 410h1v19h-1zM573 422h7v1h-7zM576 413h1v19h-1z"/><path fill="#7fff00" d="M561 46h7v1h-7zM564 43h1v7h-1z"/><path fill="#ff0000" d="M564 61h1v1h-1zM564 55h1v1h-1zM564 61h1v1h-1zM564 55h1v1h-1zM565 61h1v1h-1zM565 55h1v1h-1zM563 61h1v1h-1zM563 55h1v1h-1zM566 60h1v1h-1zM566 56h1v1h-1zM562 60h1v1h-1zM562 56h1v1h-1zM567 59h1v1h-1zM567 57h1v1h-1zM561 59h1v1h-1zM561 57h1v1h-1zM567 58h1v1h-1zM567 58h1v1h-1zM561 58h1v1h-1zM561 58h1v1h-1z"/><path fill="#ffff00" d="M561 67h7v1h-7zM561 73h7v1h-7zM561 67h1v7h-1zM567 67h1v7h-1z"/><g shape-rendering="auto" text-rendering="geometricPrecision" style="filter:grayscale(1)"><text x="475.5" y="21.5" font-size="9" textLength="94.5" lengthAdjust="spacingAndGlyphs" font-family="Liberation Sans, sans-serif" fill="#fff" stroke="#fff" stroke-width="0.15">Times: −17.258: 3.222 s</text><text x="524" y="50" font-size="9.6" textLength="32.5" lengthAdjust="spacingAndGlyphs" font-family="Liberation Sans, sans-serif" fill="#fff" stroke="#fff" stroke-width="0.15">NAI_09</text><text x="524" y="62" font-size="9.6" textLength="32.5" lengthAdjust="spacingAndGlyphs" font-family="Liberation Sans, sans-serif" fill="#fff" stroke="#fff" stroke-width="0.15">NAI_10</text><text x="524" y="74" font-size="9.6" textLength="32.5" lengthAdjust="spacingAndGlyphs" font-family="Liberation Sans, sans-serif" fill="#fff" stroke="#fff" stroke-width="0.15">NAI_11</text><text x="54.0" y="81.3" font-size="10.5" textLength="10.8" lengthAdjust="spacingAndGlyphs" font-family="Liberation Sans, sans-serif" fill="#fff" stroke="#fff" stroke-width="0.15">10</text><text x="65.5" y="75.9" font-size="6.5" textLength="3.6" lengthAdjust="spacingAndGlyphs" font-family="Liberation Sans, sans-serif" fill="#fff" stroke="#fff" stroke-width="0.15">0</text><text x="49.4" y="161.3" font-size="10.5" textLength="10.8" lengthAdjust="spacingAndGlyphs" font-family="Liberation Sans, sans-serif" fill="#fff" stroke="#fff" stroke-width="0.15">10</text><text x="60.9" y="155.9" font-size="6.5" textLength="8.2" lengthAdjust="spacingAndGlyphs" font-family="Liberation Sans, sans-serif" fill="#fff" stroke="#fff" stroke-width="0.15">−2</text><text x="49.4" y="240.3" font-size="10.5" textLength="10.8" lengthAdjust="spacingAndGlyphs" font-family="Liberation Sans, sans-serif" fill="#fff" stroke="#fff" stroke-width="0.15">10</text><text x="60.9" y="234.9" font-size="6.5" textLength="8.2" lengthAdjust="spacingAndGlyphs" font-family="Liberation Sans, sans-serif" fill="#fff" stroke="#fff" stroke-width="0.15">−4</text><text x="49.4" y="319.3" font-size="10.5" textLength="10.8" lengthAdjust="spacingAndGlyphs" font-family="Liberation Sans, sans-serif" fill="#fff" stroke="#fff" stroke-width="0.15">10</text><text x="60.9" y="313.9" font-size="6.5" textLength="8.2" lengthAdjust="spacingAndGlyphs" font-family="Liberation Sans, sans-serif" fill="#fff" stroke="#fff" stroke-width="0.15">−6</text><text x="63.2" y="375.0" font-size="10.2" font-family="Liberation Sans, sans-serif" fill="#fff" stroke="#fff" stroke-width="0.15">6</text><text x="63.2" y="388.7" font-size="10.2" font-family="Liberation Sans, sans-serif" fill="#fff" stroke="#fff" stroke-width="0.15">4</text><text x="63.2" y="406.2" font-size="10.2" font-family="Liberation Sans, sans-serif" fill="#fff" stroke="#fff" stroke-width="0.15">2</text><text x="63.2" y="423.7" font-size="10.2" font-family="Liberation Sans, sans-serif" fill="#fff" stroke="#fff" stroke-width="0.15">0</text><text x="55.3" y="441.2" font-size="10.2" textLength="13" lengthAdjust="spacingAndGlyphs" font-family="Liberation Sans, sans-serif" fill="#fff" stroke="#fff" stroke-width="0.15">−2</text><text x="55.3" y="458.7" font-size="10.2" textLength="13" lengthAdjust="spacingAndGlyphs" font-family="Liberation Sans, sans-serif" fill="#fff" stroke="#fff" stroke-width="0.15">−4</text><text x="55.3" y="473.8" font-size="10.2" textLength="13" lengthAdjust="spacingAndGlyphs" font-family="Liberation Sans, sans-serif" fill="#fff" stroke="#fff" stroke-width="0.15">−6</text><text x="163" y="488.3" font-size="10.2" textLength="11.2" lengthAdjust="spacingAndGlyphs" font-family="Liberation Sans, sans-serif" fill="#fff" stroke="#fff" stroke-width="0.15">10</text><text x="566" y="488.3" font-size="10.2" textLength="18" lengthAdjust="spacingAndGlyphs" font-family="Liberation Sans, sans-serif" fill="#fff" stroke="#fff" stroke-width="0.15">100</text><text x="296" y="501.3" font-size="9.7" textLength="62.5" lengthAdjust="spacingAndGlyphs" font-family="Liberation Sans, sans-serif" fill="#fff" stroke="#fff" stroke-width="0.15">Energy (keV)</text><g transform="translate(38.8 256) rotate(-90)"><text x="0.5" y="0" font-size="9.7" textLength="20" lengthAdjust="spacingAndGlyphs" font-family="Liberation Sans, sans-serif" fill="#fff" stroke="#fff" stroke-width="0.15">Rate</text><text x="26" y="0" font-size="9.7" textLength="36" lengthAdjust="spacingAndGlyphs" font-family="Liberation Sans, sans-serif" fill="#fff" stroke="#fff" stroke-width="0.15">(counts</text><text x="69.5" y="0" font-size="9.7" textLength="4.5" lengthAdjust="spacingAndGlyphs" font-family="Liberation Sans, sans-serif" fill="#fff" stroke="#fff" stroke-width="0.15">s</text><text x="75.8" y="-4.9" font-size="6.5" textLength="6.5" lengthAdjust="spacingAndGlyphs" font-family="Liberation Sans, sans-serif" fill="#fff" stroke="#fff" stroke-width="0.15">−1</text><text x="88.5" y="0" font-size="9.7" textLength="15.5" lengthAdjust="spacingAndGlyphs" font-family="Liberation Sans, sans-serif" fill="#fff" stroke="#fff" stroke-width="0.15">keV</text><text x="104.5" y="-4.9" font-size="6.5" textLength="7.5" lengthAdjust="spacingAndGlyphs" font-family="Liberation Sans, sans-serif" fill="#fff" stroke="#fff" stroke-width="0.15">−1</text><text x="114" y="0" font-size="9.7" textLength="3.5" lengthAdjust="spacingAndGlyphs" font-family="Liberation Sans, sans-serif" fill="#fff" stroke="#fff" stroke-width="0.15">)</text></g><text transform="translate(45.8 435) rotate(-90)" font-size="9.7" textLength="29" lengthAdjust="spacingAndGlyphs" font-family="Liberation Sans, sans-serif" fill="#fff" stroke="#fff" stroke-width="0.15">Sigma</text></g></svg></body></html>
